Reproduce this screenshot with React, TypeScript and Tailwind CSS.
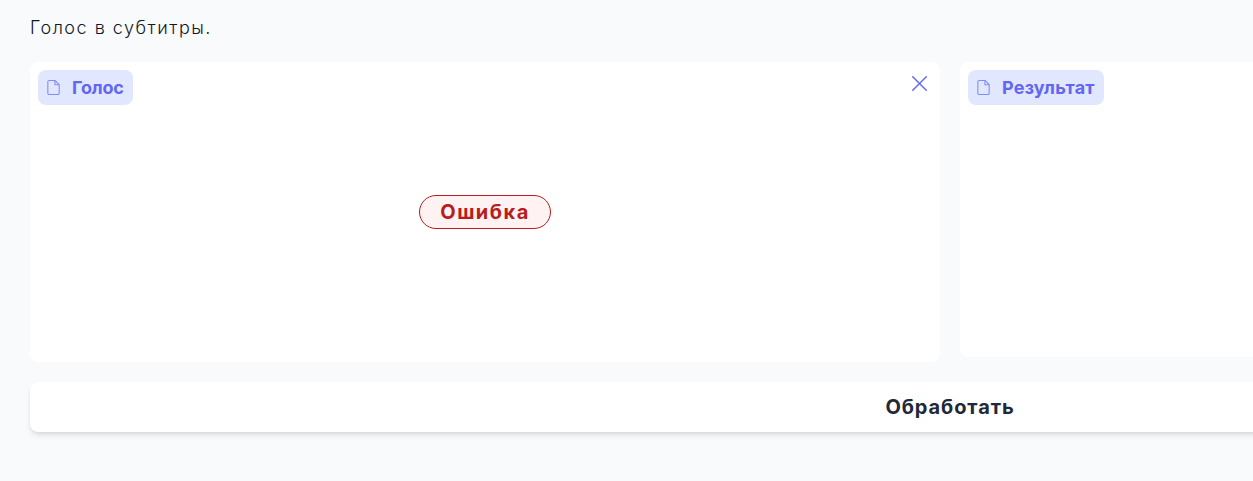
import { X } from 'lucide-react';

const font = 'font-["Inter","Liberation_Sans",sans-serif]';

function FileIcon() {
  return (
    <svg width="17" height="17" viewBox="0 0 24 24" fill="none" stroke="#818cf8" strokeWidth="1.5" strokeLinejoin="round" className="shrink-0">
      <path d="M14 2H6a2 2 0 0 0-2 2v16a2 2 0 0 0 2 2h12a2 2 0 0 0 2-2V8z" />
      <path d="M14 2v6h6" />
    </svg>
  );
}

function Tag({ label, tracking }: { label: string; tracking: string }) {
  return (
    <div className="inline-flex h-[35px] items-center gap-[10px] rounded-lg bg-[#e0e7ff] pr-[9px] pl-[7px]">
      <FileIcon />
      <span className={`text-[18px] font-bold text-[#6366f1] ${tracking}`}>{label}</span>
    </div>
  );
}

export default function App() {
  return (
    <div className={`h-[481px] w-full overflow-hidden bg-[#f9fafb] ${font}`}>
      <div className="w-[1900px] px-[30px] pt-[18px]">
        <p className="text-[18px] leading-[20px] font-light tracking-[1.5px] text-[#111827]">Голос в субтитры.</p>

        <div className="mt-6 grid grid-cols-2 items-start gap-5">
          <div className="relative h-[300px] rounded-lg bg-white p-2">
            <Tag label="Голос" tracking="tracking-[-0.2px]" />
            <button className="absolute top-[8px] right-[7.5px] text-[#6366f1]">
              <X size={27} strokeWidth={1.3} />
            </button>
            <div className="absolute inset-0 flex items-center justify-center">
              <span className="flex h-[34px] w-[132px] items-center justify-center rounded-full border border-[#b91c1c] bg-[#fef2f2] text-[20px] font-bold tracking-[1.5px] text-[#b91c1c]">
                Ошибка
              </span>
            </div>
          </div>
          <div className="h-[295px] rounded-lg bg-white p-2">
            <Tag label="Результат" tracking="tracking-[0.2px]" />
          </div>
        </div>

        <button className="mt-5 flex h-[50px] w-full items-center justify-center rounded-lg bg-white text-[20px] font-bold tracking-[0.9px] text-[#1f2937] shadow-md">
          Обработать
        </button>
      </div>
    </div>
  );
}
